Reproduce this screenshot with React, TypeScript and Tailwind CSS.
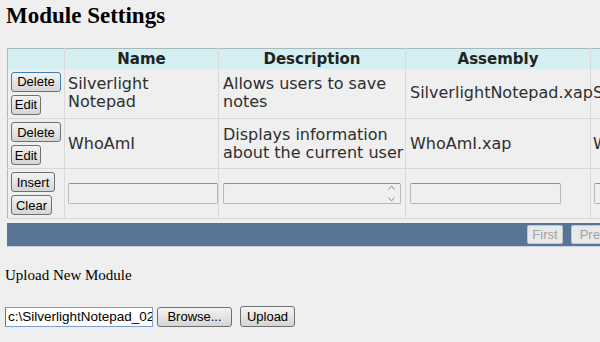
import React from "react";

const verdana = "font-['DejaVu_Sans',Verdana,sans-serif]";
const arial = "font-['Liberation_Sans',Arial,sans-serif]";
const serif = "font-['Liberation_Serif','Times_New_Roman',serif]";

function Btn({
  label,
  w,
  focus,
  className = "",
}: {
  label: string;
  w: string;
  focus?: boolean;
  className?: string;
}) {
  return (
    <button
      type="button"
      className={`${w} h-[20px] rounded-[3px] border ${
        focus ? "border-[#3c7fb1]" : "border-[#707070]"
      } bg-linear-to-b from-[#f3f3f3] to-[#d5d5d5] text-[13px] leading-none text-black ${arial} flex items-center justify-center ${className}`}
    >
      {label}
    </button>
  );
}

function TextBox({ w, textarea }: { w: string; textarea?: boolean }) {
  return (
    <div
      className={`${w} h-[21px] rounded-[2px] border border-[#b8b8b8] border-t-[#8f8f8f] bg-[#efefef] flex justify-end items-center pr-[3px]`}
    >
      {textarea && (
        <div className="w-[11px] h-[17px] flex flex-col items-center justify-between">
          <svg width="7" height="5" viewBox="0 0 7 5">
            <path d="M0.5 4.5 L3.5 1 L6.5 4.5" fill="none" stroke="#8a8a8a" strokeWidth="1" />
          </svg>
          <svg width="7" height="5" viewBox="0 0 7 5">
            <path d="M0.5 0.5 L3.5 4 L6.5 0.5" fill="none" stroke="#8a8a8a" strokeWidth="1" />
          </svg>
        </div>
      )}
    </div>
  );
}

const rows = [
  {
    name: ["Silverlight", "Notepad"],
    desc: ["Allows users to save", "notes"],
    asm: "SilverlightNotepad.xap",
    extra: "Silverlight",
    focus: true,
  },
  {
    name: ["WhoAmI"],
    desc: ["Displays information", "about the current user"],
    asm: "WhoAmI.xap",
    extra: "WhoAmI",
    focus: false,
  },
];

export default function App() {
  const cell = "border-r border-b border-[#d9d9d9] align-middle";
  return (
    <div className="w-[600px] h-[342px] bg-[#efefef] overflow-hidden">
      <h1 className={`${serif} font-bold text-[23px] leading-[23px] text-black pl-[6px] pt-[4px]`}>
        Module Settings
      </h1>

      <div className="ml-[7px] mt-[21px] w-[593px] overflow-hidden">
        <table className={`table-fixed border-collapse w-[720px] ${verdana}`}>
          <colgroup>
            <col className="w-[57px]" />
            <col className="w-[154px]" />
            <col className="w-[187px]" />
            <col className="w-[185px]" />
            <col className="w-[137px]" />
          </colgroup>
          <thead>
            <tr className="h-[20px] bg-[#d4eff1] text-[15px] leading-[18px] font-bold text-[#222]">
              <th className="border-t border-l border-r border-[#a9b8bb] border-r-[#d9d9d9]" />
              <th className="border-t border-r border-[#a9b8bb] border-r-[#d9d9d9]">Name</th>
              <th className="border-t border-r border-[#a9b8bb] border-r-[#d9d9d9]">Description</th>
              <th className="border-t border-r border-[#a9b8bb] border-r-[#d9d9d9]">Assembly</th>
              <th className="border-t border-[#a9b8bb]" />
            </tr>
          </thead>
          <tbody className="text-[16px] leading-[18px] text-[#2e2e2e]">
            {rows.map((r) => (
              <tr key={r.asm} className="h-[50px]">
                <td className={`${cell} border-l border-l-[#a9b8bb] pl-[3px]`}>
                  <div className="flex flex-col gap-[3px]">
                    <Btn label="Delete" w="w-[50px]" focus={r.focus} />
                    <Btn label="Edit" w="w-[30px]" />
                  </div>
                </td>
                <td className={`${cell} pl-[3px]`}>
                  {r.name.map((l) => (
                    <div key={l}>{l}</div>
                  ))}
                </td>
                <td className={`${cell} pl-[4px] whitespace-nowrap`}>
                  {r.desc.map((l) => (
                    <div key={l}>{l}</div>
                  ))}
                </td>
                <td className={`${cell} pl-[4px] whitespace-nowrap`}>{r.asm}</td>
                <td className={`${cell} pl-[2px] whitespace-nowrap`}>{r.extra}</td>
              </tr>
            ))}
            <tr className="h-[50px]">
              <td className={`${cell} border-l border-l-[#a9b8bb] pl-[3px]`}>
                <div className="flex flex-col gap-[3px]">
                  <Btn label="Insert" w="w-[44px]" />
                  <Btn label="Clear" w="w-[41px]" />
                </div>
              </td>
              <td className={`${cell} pl-[3px]`}>
                <TextBox w="w-[150px]" />
              </td>
              <td className={`${cell} pl-[4px]`}>
                <TextBox w="w-[178px]" textarea />
              </td>
              <td className={`${cell} pl-[4px]`}>
                <TextBox w="w-[151px]" />
              </td>
              <td className={`${cell} pl-[3px]`}>
                <TextBox w="w-[120px]" />
              </td>
            </tr>
          </tbody>
        </table>

        <div className="mt-[4px] h-[24px] bg-[#587595] border-b border-[#c9d3dd] flex items-center gap-[8px] pl-[520px]">
          <div
            className={`w-[36px] h-[19px] shrink-0 rounded-[2px] border border-[#c4c4c4] bg-[#e9e9e9] text-[13px] text-[#a3a3a3] ${arial} flex items-center justify-center`}
          >
            First
          </div>
          <div
            className={`w-[44px] h-[19px] shrink-0 rounded-[2px] border border-[#c4c4c4] bg-[#e9e9e9] text-[13px] text-[#a3a3a3] ${arial} flex items-center justify-center`}
          >
            Prev
          </div>
        </div>
      </div>

      <p className={`${serif} text-[15px] leading-[17px] text-black pl-[5px] mt-[20px]`}>
        Upload New Module
      </p>

      <div className="flex items-center pl-[5px] mt-[22px]">
        <div
          className={`w-[148px] h-[20px] border border-[#7aa2cf] border-l-[#3c7fb1] bg-white text-[13.5px] leading-[18px] text-black ${arial} pl-[2px] overflow-hidden whitespace-nowrap`}
        >
          c:\SilverlightNotepad_02_0
        </div>
        <Btn label="Browse..." w="w-[75px]" className="ml-[4px]" />
        <Btn label="Upload" w="w-[55px]" className="ml-[8px] h-[21px]" />
      </div>
    </div>
  );
}
